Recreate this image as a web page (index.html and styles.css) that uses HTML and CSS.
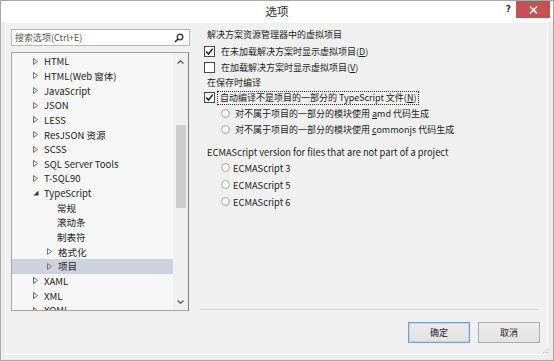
FILE: index.html
```html
<!DOCTYPE html>
<html lang="zh-CN">
<head>
<meta charset="utf-8">
<title>选项</title>
<link rel="stylesheet" href="styles.css">
</head>
<body>
<div class="window">
  <div class="titlebar">
    <div class="tb-side"></div>
    <div class="title">选项</div>
    <div class="tb-side tb-right">
      <span class="help">?</span>
      <span class="close"><svg width="9" height="8" viewBox="0 0 9 8"><path d="M1 0.5 L8 7.5 M8 0.5 L1 7.5" stroke="#fff" stroke-width="1.6"/></svg></span>
    </div>
  </div>
  <div class="body">
    <div class="frame">
      <div class="left">
        <div class="search">
          <span class="placeholder">搜索选项(Ctrl+E)</span>
          <svg class="mag" width="10" height="10" viewBox="0 0 10 10"><circle cx="6" cy="4" r="2.8" fill="none" stroke="#333" stroke-width="1.3"/><path d="M4 6 L1 9" stroke="#333" stroke-width="1.6"/></svg>
        </div>
        <div class="tree">
          <div class="tree-list">
            <div class="row l0"><span class="arr"><svg width="5" height="7" viewBox="0 0 5 7"><path d="M0.5 0.5 L4.5 3.5 L0.5 6.5 Z" fill="none" stroke="#777"/></svg></span>HTML</div>
            <div class="row l0"><span class="arr"><svg width="5" height="7" viewBox="0 0 5 7"><path d="M0.5 0.5 L4.5 3.5 L0.5 6.5 Z" fill="none" stroke="#777"/></svg></span>HTML(Web 窗体)</div>
            <div class="row l0"><span class="arr"><svg width="5" height="7" viewBox="0 0 5 7"><path d="M0.5 0.5 L4.5 3.5 L0.5 6.5 Z" fill="none" stroke="#777"/></svg></span>JavaScript</div>
            <div class="row l0"><span class="arr"><svg width="5" height="7" viewBox="0 0 5 7"><path d="M0.5 0.5 L4.5 3.5 L0.5 6.5 Z" fill="none" stroke="#777"/></svg></span>JSON</div>
            <div class="row l0"><span class="arr"><svg width="5" height="7" viewBox="0 0 5 7"><path d="M0.5 0.5 L4.5 3.5 L0.5 6.5 Z" fill="none" stroke="#777"/></svg></span>LESS</div>
            <div class="row l0"><span class="arr"><svg width="5" height="7" viewBox="0 0 5 7"><path d="M0.5 0.5 L4.5 3.5 L0.5 6.5 Z" fill="none" stroke="#777"/></svg></span>ResJSON 资源</div>
            <div class="row l0"><span class="arr"><svg width="5" height="7" viewBox="0 0 5 7"><path d="M0.5 0.5 L4.5 3.5 L0.5 6.5 Z" fill="none" stroke="#777"/></svg></span>SCSS</div>
            <div class="row l0"><span class="arr"><svg width="5" height="7" viewBox="0 0 5 7"><path d="M0.5 0.5 L4.5 3.5 L0.5 6.5 Z" fill="none" stroke="#777"/></svg></span>SQL Server Tools</div>
            <div class="row l0"><span class="arr"><svg width="5" height="7" viewBox="0 0 5 7"><path d="M0.5 0.5 L4.5 3.5 L0.5 6.5 Z" fill="none" stroke="#777"/></svg></span>T-SQL90</div>
            <div class="row l0"><span class="arr"><svg width="6" height="6" viewBox="0 0 6 6"><path d="M5.5 0.5 L5.5 5.5 L0.5 5.5 Z" fill="#333"/></svg></span>TypeScript</div>
            <div class="row l1 leaf">常规</div>
            <div class="row l1 leaf">滚动条</div>
            <div class="row l1 leaf">制表符</div>
            <div class="row l1"><span class="arr"><svg width="5" height="7" viewBox="0 0 5 7"><path d="M0.5 0.5 L4.5 3.5 L0.5 6.5 Z" fill="none" stroke="#777"/></svg></span>格式化</div>
            <div class="row l1 selected"><span class="arr"><svg width="5" height="7" viewBox="0 0 5 7"><path d="M0.5 0.5 L4.5 3.5 L0.5 6.5 Z" fill="none" stroke="#777"/></svg></span>项目</div>
            <div class="row l0"><span class="arr"><svg width="5" height="7" viewBox="0 0 5 7"><path d="M0.5 0.5 L4.5 3.5 L0.5 6.5 Z" fill="none" stroke="#777"/></svg></span>XAML</div>
            <div class="row l0"><span class="arr"><svg width="5" height="7" viewBox="0 0 5 7"><path d="M0.5 0.5 L4.5 3.5 L0.5 6.5 Z" fill="none" stroke="#777"/></svg></span>XML</div>
            <div class="row l0"><span class="arr"><svg width="5" height="7" viewBox="0 0 5 7"><path d="M0.5 0.5 L4.5 3.5 L0.5 6.5 Z" fill="none" stroke="#777"/></svg></span>XOML</div>
          </div>
          <div class="vscroll">
            <div class="sbtn"><svg width="7" height="4" viewBox="0 0 7 4"><path d="M0.5 3.5 L3.5 0.8 L6.5 3.5" fill="none" stroke="#555" stroke-width="1.2"/></svg></div>
            <div class="track"><div class="thumb"></div></div>
            <div class="sbtn"><svg width="7" height="4" viewBox="0 0 7 4"><path d="M0.5 0.5 L3.5 3.2 L6.5 0.5" fill="none" stroke="#555" stroke-width="1.2"/></svg></div>
          </div>
        </div>
      </div>
      <div class="right">
        <div class="options">
          <div class="hdr">解决方案资源管理器中的虚拟项目</div>
          <div class="cb-row"><span class="cb"><svg width="9" height="9" viewBox="0 0 9 9"><path d="M1.2 4.6 L3.5 7 L7.8 1.6" fill="none" stroke="#222" stroke-width="1.5"/></svg></span><span>在未加载解决方案时显示虚拟项目(<u>D</u>)</span></div>
          <div class="cb-row"><span class="cb"></span><span>在加载解决方案时显示虚拟项目(<u>V</u>)</span></div>
          <div class="hdr hdr2">在保存时编译</div>
          <div class="cb-row cb3"><span class="cb"><svg width="9" height="9" viewBox="0 0 9 9"><path d="M1.2 4.6 L3.5 7 L7.8 1.6" fill="none" stroke="#222" stroke-width="1.5"/></svg></span><span class="focus">自动编译不是项目的一部分的 TypeScript 文件(<u>N</u>)</span></div>
          <div class="rb-row"><span class="rb"></span><span>对不属于项目的一部分的模块使用 <u>a</u>md 代码生成</span></div>
          <div class="rb-row"><span class="rb"></span><span>对不属于项目的一部分的模块使用 <u>c</u>ommonjs 代码生成</span></div>
          <div class="hdr hdr3">ECMAScript version for files that are not part of a project</div>
          <div class="rb-row es"><span class="rb"></span><span>ECMAScript 3</span></div>
          <div class="rb-row es"><span class="rb"></span><span>ECMAScript 5</span></div>
          <div class="rb-row es"><span class="rb"></span><span>ECMAScript 6</span></div>
        </div>
        <div class="sep"></div>
        <div class="buttons">
          <button class="btn default">确定</button>
          <button class="btn">取消</button>
        </div>
      </div>
    </div>
  </div>
  <svg class="grip" width="8" height="8" viewBox="0 0 8 8"><g fill="#b8b8b8"><rect x="6" y="0" width="1" height="1"/><rect x="4" y="2" width="1" height="1"/><rect x="6" y="2" width="1" height="1"/><rect x="2" y="4" width="1" height="1"/><rect x="4" y="4" width="1" height="1"/><rect x="6" y="4" width="1" height="1"/></g></svg>
</div>
</body>
</html>
```

FILE: styles.css
```css
* { box-sizing: border-box; }
html, body { margin: 0; padding: 0; background: #ffffff; }
body {
  font-family: "Noto Sans CJK SC", "Noto Sans", sans-serif;
  color: #1e1e1e;
}
.window {
  position: relative;
  width: 554px;
  height: 361px;
  border: 1px solid #a9a9a9;
  display: flex;
  flex-direction: column;
  background: #f0f0f0;
}
.titlebar {
  height: 21px;
  background: #ffffff;
  display: grid;
  grid-template-columns: 1fr auto 1fr;
  align-items: start;
}
.title {
  font-size: 11.5px;
  line-height: 21px;
  color: #2b2b2b;
}
.tb-right {
  display: flex;
  justify-content: flex-end;
  align-items: flex-start;
  padding-right: 3px;
}
.help {
  font-family: "DejaVu Sans", sans-serif;
  font-weight: bold;
  font-size: 9px;
  line-height: 14px;
  color: #333;
  margin-right: 5px;
  margin-top: 1px;
}
.close {
  width: 34px;
  height: 17px;
  background: #c75050;
  display: flex;
  align-items: center;
  justify-content: center;
}
.body {
  flex: 1;
  padding: 0 5px 5px 4px;
  display: flex;
  background: #ececec;
}
.frame {
  flex: 1;
  border: 1px solid #fbfbfb;
  background: #f0f0f0;
  display: flex;
}
.left {
  width: 184px;
  padding: 6px 0 0 5px;
  display: flex;
  flex-direction: column;
}
.search {
  width: 179px;
  height: 17px;
  background: #fff;
  border: 1px solid #b9b9b9;
  display: flex;
  align-items: center;
  justify-content: space-between;
  padding: 0 5px 0 3px;
}
.placeholder {
  font-size: 9px;
  color: #555;
  line-height: 15px;
}
.mag { display: block; }
.tree {
  margin-top: 6px;
  width: 178px;
  height: 259px;
  border: 1px solid #a4a4a4;
  border-right-color: #7d7d7d;
  background: #f6f6f6;
  display: flex;
}
.tree-list {
  flex: 1;
  overflow: hidden;
  padding-top: 1px;
}
.row {
  height: 14.65px;
  display: flex;
  align-items: center;
  font-size: 9.5px;
  white-space: nowrap;
  color: #1e1e1e;
}
.row.l0 { padding-left: 21px; }
.row.l1 { padding-left: 35px; }
.row.leaf { padding-left: 45px; }
.row.selected { background: #cdd1e0; }
.arr {
  width: 11px;
  display: flex;
  align-items: center;
}
.arr svg { display: block; }
.vscroll {
  width: 15px;
  display: flex;
  flex-direction: column;
  background: #f0f0f0;
}
.sbtn {
  height: 17px;
  display: flex;
  align-items: center;
  justify-content: center;
}
.track {
  flex: 1;
  padding: 55px 2px 0 3px;
}
.thumb {
  height: 83px;
  background: #cdcdcd;
}
.right {
  flex: 1;
  display: flex;
  flex-direction: column;
  padding: 4px 7px 11px 10px;
}
.options {
  flex: 1;
  padding-left: 4px;
}
.hdr {
  height: 16px;
  line-height: 16px;
  font-size: 9px;
  padding-left: 3px;
  white-space: nowrap;
}
.hdr2 { height: 15px; line-height: 15px; }
.hdr3 { margin-top: 8px; height: 14px; line-height: 14px; font-size: 9.3px; }
.cb-row {
  height: 16px;
  display: flex;
  align-items: center;
  gap: 6px;
  font-size: 9px;
  white-space: nowrap;
}
.cb3 { height: 15px; }
.cb {
  width: 11px;
  height: 11px;
  background: #fff;
  border: 1px solid #4a4a4a;
  display: flex;
  align-items: center;
  justify-content: center;
}
.cb svg { display: block; }
.focus {
  outline: 1px dotted #333;
  outline-offset: 0;
  padding: 0 2px;
  margin-left: -3px;
  line-height: 12px;
}
.rb-row {
  height: 16px;
  display: flex;
  align-items: center;
  gap: 5px;
  padding-left: 17px;
  font-size: 9px;
  white-space: nowrap;
}
.rb-row.es { height: 17px; gap: 3px; font-size: 9.3px; }
.rb {
  width: 9px;
  height: 9px;
  border-radius: 50%;
  border: 1px solid #a8a8a8;
  background: #fbfbfb;
}
u { text-decoration: underline; text-underline-offset: 1px; }
.sep {
  height: 1px;
  background: #d6d6d6;
  margin: 0 2px 12px 0;
}
.buttons {
  display: flex;
  justify-content: flex-end;
  gap: 8px;
}
.btn {
  width: 62px;
  height: 21px;
  font-family: "Noto Sans CJK SC", sans-serif;
  font-size: 9px;
  color: #1e1e1e;
  background: linear-gradient(#ececec, #e2e2e2);
  border: 1px solid #adadad;
  padding: 0;
}
.btn.default {
  border-color: #6fa3d8;
  box-shadow: inset 0 0 0 1px #b9d7f2;
}
.grip {
  position: absolute;
  right: 4px;
  bottom: 4px;
}
```
